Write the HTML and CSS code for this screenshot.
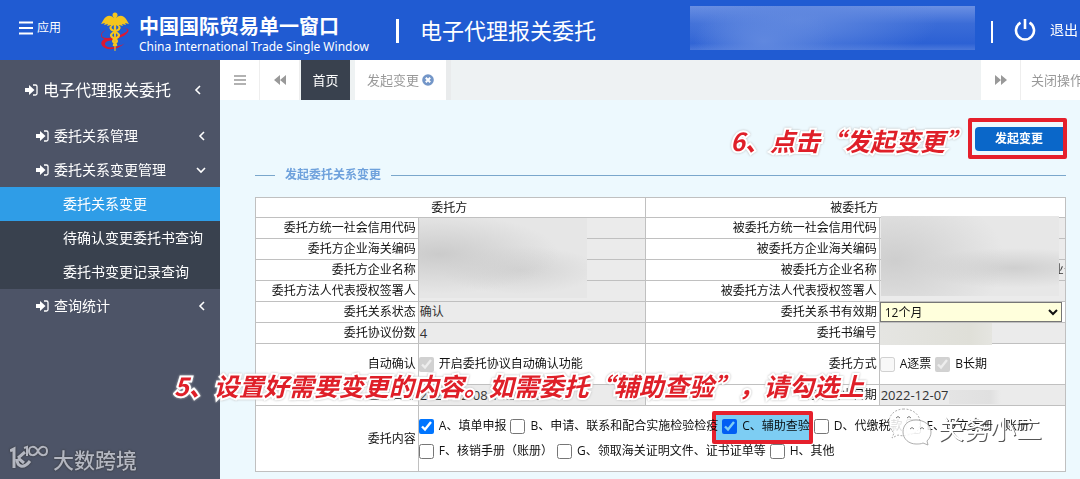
FILE: index.html
```html
<!DOCTYPE html>
<html lang="zh-CN">
<head>
<meta charset="utf-8">
<title>电子代理报关委托</title>
<link rel="stylesheet" href="styles.css">
</head>
<body>
<svg class="defs" aria-hidden="true">
  <symbol id="enter" viewBox="0 0 13 12"><path d="M0 4h4V1l5.500 5L4 11V8H0z" fill="currentColor"/><path d="M8 1h2.500q1.500 0 1.500 1.500v7q0 1.500-1.500 1.500H8" fill="none" stroke="currentColor" stroke-width="1.300"/></symbol>
  <symbol id="left" viewBox="0 0 8 10"><path d="M6 1L2 5l4 4" fill="none" stroke="currentColor" stroke-width="1.600"/></symbol>
  <symbol id="down" viewBox="0 0 10 8"><path d="M1 2l4 4 4-4" fill="none" stroke="currentColor" stroke-width="1.600"/></symbol>
</svg>

<header class="topbar">
  <button class="apps" type="button">
    <svg width="14" height="14" viewBox="0 0 14 14"><path d="M0 1.500h14M0 7h14M0 12.500h14" stroke="#fff" stroke-width="2"/></svg>
    <span>应用</span>
  </button>
  <svg class="emblem" width="30" height="40" viewBox="0 0 30 40">
    <g fill="#f5c51d">
      <path d="M14 6C10 2 6 4 4 7L1 12l4-1-1 2 4-1-1 2 4-1 0 2 3-2zM16 6c4-4 8-2 10 1l3 5-4-1 1 2-4-1 1 2-4-1 0 2-3-2z"/>
      <circle cx="15" cy="3" r="2.500"/>
    </g>
    <path d="M6 18c-6 3-6 8 1 8 9 0 18-5 20-7 1-2-2-3-7-2 6-2 10 0 8 3-3 5-14 8-20 9-4 1-4 5 0 6 5 1 13-1 17-4-5 5-14 8-20 5-5-3-5-7 0-9-6-1-5-7 1-9z" fill="#dc1830"/>
    <path d="M11 14c-3 5 7 5 8 9 0 4-6 3-6 6 0 2 4 2 3 5M19 14c3 5-7 5-8 9 0 4 6 3 6 6 0 2-4 2-3 5" fill="none" stroke="#f5c51d" stroke-width="2.200"/>
    <path d="M13.500 4h3l-1 35h-1z" fill="#f5c51d"/>
  </svg>
  <div class="brand">
    <strong>中国国际贸易单一窗口</strong>
    <span>China International Trade Single Window</span>
  </div>
  <i class="bar"></i>
  <h1>电子代理报关委托</h1>
  <div class="userblur"></div>
  <i class="bar thin"></i>
  <button class="exit" type="button">
    <svg width="22" height="22" viewBox="0 0 22 22"><path d="M6.500 3.700a9 9 0 1 0 9 0M11 0v10" fill="none" stroke="#fff" stroke-width="2.600"/></svg>
    <span>退出</span>
  </button>
</header>

<div class="body">
  <nav class="side">
    <a class="root" href="#"><svg width="13" height="12"><use href="#enter"/></svg><span>电子代理报关委托</span><svg class="arrow" width="8" height="10"><use href="#left"/></svg></a>
    <a class="item" href="#"><svg width="13" height="12"><use href="#enter"/></svg><span>委托关系管理</span><svg class="arrow" width="8" height="10"><use href="#left"/></svg></a>
    <a class="item" href="#"><svg width="13" height="12"><use href="#enter"/></svg><span>委托关系变更管理</span><svg class="arrow" width="10" height="8"><use href="#down"/></svg></a>
    <div class="sub">
      <a class="active" href="#">委托关系变更</a>
      <a href="#">待确认变更委托书查询</a>
      <a href="#">委托书变更记录查询</a>
    </div>
    <a class="item" href="#"><svg width="13" height="12"><use href="#enter"/></svg><span>查询统计</span><svg class="arrow" width="8" height="10"><use href="#left"/></svg></a>
  </nav>

  <main>
    <div class="tabs">
      <button class="tool" type="button" aria-label="菜单"><svg width="12" height="10" viewBox="0 0 12 10"><path d="M0 1h12M0 5h12M0 9h12" stroke="currentColor" stroke-width="1.600"/></svg></button>
      <button class="tool" type="button" aria-label="向左"><svg width="12" height="10" viewBox="0 0 12 10"><path d="M6 0v10L0 5zM12 0v10L6 5z" fill="currentColor"/></svg></button>
      <button class="tab home" type="button">首页</button>
      <button class="tab current" type="button">发起变更
        <svg width="12" height="12" viewBox="0 0 12 12"><circle cx="6" cy="6" r="5.800" fill="#7396c8"/><path d="M3.800 3.800l4.400 4.400M8.200 3.800l-4.400 4.400" stroke="#fff" stroke-width="2"/></svg>
      </button>
      <span class="space"></span>
      <button class="tool" type="button" aria-label="向右"><svg width="12" height="10" viewBox="0 0 12 10"><path d="M0 0v10l6-5zM6 0v10l6-5z" fill="currentColor"/></svg></button>
      <button class="ops" type="button">关闭操作</button>
    </div>

    <section class="content">
      <div class="actions">
        <p class="note">6、点击“发起变更”</p>
        <div class="redbox"><button class="primary" type="button">发起变更</button></div>
      </div>
      <h2>发起委托关系变更</h2>

      <table>
        <colgroup><col class="c1"><col class="c2"><col class="c3"><col class="c4"></colgroup>
        <tr><th colspan="2">委托方</th><th colspan="2">被委托方</th></tr>
        <tr><th>委托方统一社会信用代码</th><td class="ro"><div class="veil left"></div></td><th>被委托方统一社会信用代码</th><td class="ro"><div class="veil right"></div></td></tr>
        <tr><th>委托方企业海关编码</th><td class="ro"></td><th>被委托方企业海关编码</th><td class="ro"></td></tr>
        <tr><th>委托方企业名称</th><td class="ro"></td><th>被委托方企业名称</th><td class="ro"><div class="tail">业公</div></td></tr>
        <tr><th>委托方法人代表授权签署人</th><td class="ro"></td><th>被委托方法人代表授权签署人</th><td class="ro"></td></tr>
        <tr><th>委托关系状态</th><td class="ro">确认</td><th><label for="term">委托关系书有效期</label></th><td><select id="term"><option>12个月</option></select></td></tr>
        <tr><th>委托协议份数</th><td class="ro num">4</td><th>委托书编号</th><td class="ro"><div class="veil code"></div></td></tr>
        <tr class="tall"><th>自动确认</th><td><label><input type="checkbox" checked disabled>开启委托协议自动确认功能</label></td><th>委托方式</th><td><label><input type="checkbox" disabled>A逐票</label><label><input type="checkbox" checked disabled>B长期</label></td></tr>
        <tr class="dates"><th>签订日期</th><td class="ro num">2021-12-08 14:25:00</td><th>有效截止日期</th><td class="ro num">2022-12-07<i class="smudge"></i></td></tr>
        <tr class="scope"><th>委托内容</th><td colspan="3">
          <div class="line"><label><input type="checkbox" checked>A、填单申报</label><label><input type="checkbox">B、申请、联系和配合实施检验检疫</label><label class="marked"><input type="checkbox" checked>C、辅助查验</label><label><input type="checkbox">D、代缴税款</label><label><input type="checkbox">E、设立手册（账册）</label></div>
          <div class="line"><label><input type="checkbox">F、核销手册（账册）</label><label><input type="checkbox">G、领取海关证明文件、证书证单等</label><label><input type="checkbox">H、其他</label></div>
        </td></tr>
      </table>
    </section>
  </main>
</div>

<p class="note step5">5、设置好需要变更的内容。如需委托“辅助查验”，请勾选上</p>

<div class="wechat">
  <svg width="44" height="40" viewBox="0 0 44 40" fill="#fff" fill-opacity=".85" stroke="#999" stroke-width=".8">
    <path d="M16 1C7 1 1 7 1 14c0 5 2 8 5 11l-2 5 6-3c3 1 6 1 9 0 11-1 13-7 13-13C32 7 25 1 16 1z" stroke-dasharray="2 1.500"/>
    <path d="M28 12c-8 0-13 5-13 12s6 12 13 12c3 0 5 0 7-1l5 2-1-4c3-3 4-6 4-9 0-7-7-12-15-12z"/>
    <path d="M8 10q2-3 4 0M19 10q2-3 4 0M22 21q2-3 4 0M32 21q2-3 4 0" fill="none" stroke="#555"/>
  </svg>
  <span>关务小二</span>
</div>

<div class="watermark">
  <svg width="38" height="26" viewBox="0 0 38 26" fill="none" stroke="currentColor">
    <path d="M0 6l4-2v19M7 14C7 21 13 25 20 16M8 13l7-6M8 13l6 5" stroke-width="3"/>
    <path d="M14 3l3-1v9" stroke-width="2"/>
    <path d="M28 6c-3-6-9-5-9 0s6 6 9 0 9-5 9 0-6 6-9 0z" stroke-width="2"/>
  </svg>
  <span>大数跨境</span>
</div>
</body>
</html>
```
FILE: styles.css
```css
* { box-sizing: border-box; }

body {
  margin: 0;
  min-height: 100vh;
  display: flex;
  flex-direction: column;
  position: relative;
  overflow: hidden;
  font: 12px/20px "Open Sans", "Noto Sans CJK SC", sans-serif;
  color: #111;
}

button {
  font: inherit;
  color: inherit;
  border: 0;
  padding: 0;
  background: none;
  white-space: nowrap;
}

a { color: inherit; text-decoration: none; }
svg { display: block; flex: none; }
.defs { position: absolute; width: 0; height: 0; }

/* top bar */
.topbar {
  height: 60px;
  display: flex;
  align-items: center;
  background: #205bd2;
  color: #fff;
  padding: 0 2px 0 19px;
  white-space: nowrap;
}
.apps { display: flex; align-items: center; gap: 4px; margin-bottom: 4px; }
.emblem { margin: 4px 9px 0 39px; }
.brand { display: flex; flex-direction: column; padding-top: 9px; }
.brand strong { font-size: 20px; line-height: 24px; }
.brand span { font-size: 12px; line-height: 16px; font-family: "Noto Sans", sans-serif; }
.bar { width: 3px; height: 24px; margin: 2px 21px 0 27px; background: #fff; flex: none; }
.topbar h1 { margin: 0; font-size: 22px; line-height: 30px; font-weight: 400; }
.userblur {
  flex: none;
  width: 285px;
  height: 44px;
  margin: 0 16px 4px auto;
  background:
    radial-gradient(ellipse 70px 40px at 26% 80%, #6088df 0, transparent 100%),
    radial-gradient(ellipse 140px 50px at 38% 30%, #6088df 0, transparent 100%),
    linear-gradient(#6b90e3, #3b6cd7 40%, #2c61d4 85%, #4a78db);
}
.bar.thin { width: 2px; height: 22px; margin: 4px 21px 0 0; }
.exit { display: flex; align-items: center; gap: 14px; font-size: 14px; }

.body { flex: 1; display: flex; min-height: 0; }

/* sidebar */
.side { width: 220px; flex: none; background: #4d5467; color: #fff; font-size: 14px; }
.side a { display: flex; align-items: center; }
.root { height: 59px; padding: 0 18px 0 25px; gap: 5px; font-size: 16px; }
.item { height: 34px; padding: 0 14px 0 36px; gap: 5px; }
.root .arrow, .item .arrow { margin-left: auto; }
.sub { background: #39414e; }
.sub a { height: 34px; padding-left: 63px; }
.sub .active { background: #2f9de7; }

/* tabs */
main { flex: 1; min-width: 0; background: #edf9fe; }
.tabs { display: flex; height: 40px; background: #eef2f3; color: #999; font-size: 13px; overflow: hidden; }
.tabs > button { display: flex; flex: none; align-items: center; justify-content: center; background: #fff; }
.tabs .tool { width: 40px; border-right: 1px solid #eee; color: #999; }
.tabs .home { background: #39414e; color: #fff; padding: 0 11px; margin: 0 5px 0 1px; width: 49px; }
.tabs .current { padding: 0 12px; gap: 3px; border-right: 0; box-shadow: 5px 0 #e9ebec; }
.space { flex: 1; }
.tabs .ops { width: 59px; justify-content: flex-start; padding-left: 10px; }

/* content */
.content { padding: 18px 14px 7px 35px; }
.actions { display: flex; justify-content: flex-end; align-items: center; }
.redbox { border: 4px solid #e5202c; padding: 5px 0 4px 3px; border-radius: 2px; margin: 0 -1px 0 -2px; }
.primary {
  display: block;
  width: 88px;
  height: 24px;
  border-radius: 4px 0 0 4px;
  background: #0a67c9;
  color: #fff;
  font-weight: 700;
}
.note {
  margin: 0;
  padding-top: 2px;
  font: italic 700 25px/36px "Noto Sans CJK SC", sans-serif;
  color: #df1f28;
  white-space: nowrap;
  -webkit-text-stroke: 4px #fff;
  paint-order: stroke fill;
  filter: drop-shadow(0 0 1px #bbb);
}
h2 {
  display: flex;
  align-items: center;
  gap: 10px;
  margin: 6px 0 12px;
  font-size: 12px;
  line-height: 20px;
  color: #6ea1dc;
}
h2::before, h2::after { content: ""; height: 1px; background: #7aa7cc; flex: 0 0 20px; }
h2::after { flex: 1; }

table { width: 100%; border-collapse: collapse; table-layout: fixed; background: #fff; }
.c1 { width: 20.1%; }
.c2 { width: 28%; }
.c3 { width: 28.9%; }
.c4 { width: 23%; }
th, td { height: 21px; padding: 0 0 0 1px; border: 1px solid #c0c0c0; font-weight: 400; line-height: 18px; text-align: left; white-space: nowrap; }
th { text-align: right; padding: 0 2px 0 0; }
tr:first-child th { text-align: center; height: 20px; }
td { position: relative; }
.ro { background: #ebebeb; color: #333; }
.num { font-size: 13px; }
.tall > * { height: 41px; }
.scope > * { height: 66px; }
td label { display: inline-flex; align-items: center; vertical-align: middle; margin-right: 4px; position: relative; }
.tall td, .scope td { padding-left: 0; }
input { width: 15px; height: 15px; margin: 0 5px 0 0; flex: none; }
.line { display: flex; height: 25px; }
select {
  display: block;
  width: calc(100% - 2px);
  height: 20px;
  margin-left: -1px;
  background: #ffffdc;
  border: 1px solid #767676;
  border-radius: 0;
  font: inherit;
  color: #111;
}

/* obscured values */
.veil { position: absolute; z-index: 1; }
.left {
  top: 0; left: 0; width: 168px; height: 80px;
  background:
    radial-gradient(ellipse 120px 40px at 12% 45%, #cbcbcb 0, transparent 100%),
    radial-gradient(ellipse 80px 24px at 60% 65%, #d3d3d3 0, transparent 100%),
    #e6e6e6;
}
.right {
  top: -2px; left: 1px; width: 178px; height: 80px;
  background:
    radial-gradient(ellipse 110px 70px at 8% 55%, #cecece 0, transparent 100%),
    radial-gradient(ellipse 100px 20px at 75% 65%, #cfcfcf 0, transparent 100%),
    #e7e7e7;
}
.code { top: 0; left: 0; width: 112px; height: 22px; background: linear-gradient(90deg, #e5e5e2, #dfdfd8 80%, #e5e5e0); }
.tail { width: 100%; overflow: hidden; height: 18px; padding-left: 171px; }
.smudge { display: inline-block; vertical-align: middle; width: 52px; height: 14px; background: linear-gradient(90deg, #e4e4e4, #e0e0e0 80%, #ebebeb); }

.marked::after {
  content: "";
  position: absolute;
  inset: -3px -3px -5px -10px;
  border: 4px solid #e5202c;
  border-radius: 2px;
  background: #7dcdf3;
  mix-blend-mode: multiply;
  pointer-events: none;
}

/* overlays */
.step5 { position: absolute; left: 174px; top: 365px; z-index: 3; }
.wechat { position: absolute; right: 38px; top: 408px; display: flex; gap: 6px; align-items: center; z-index: 2; }
.wechat span { font: 26px/38px "Noto Sans CJK SC", sans-serif; color: #fff; text-shadow: 1px 1px 0 #555; }
.watermark { position: absolute; left: 10px; top: 445px; display: flex; gap: 5px; color: #b4b7c1; filter: drop-shadow(0 0 1px #333); }
.watermark span { font: 500 21px/28px "Noto Sans CJK SC", sans-serif; }
```
